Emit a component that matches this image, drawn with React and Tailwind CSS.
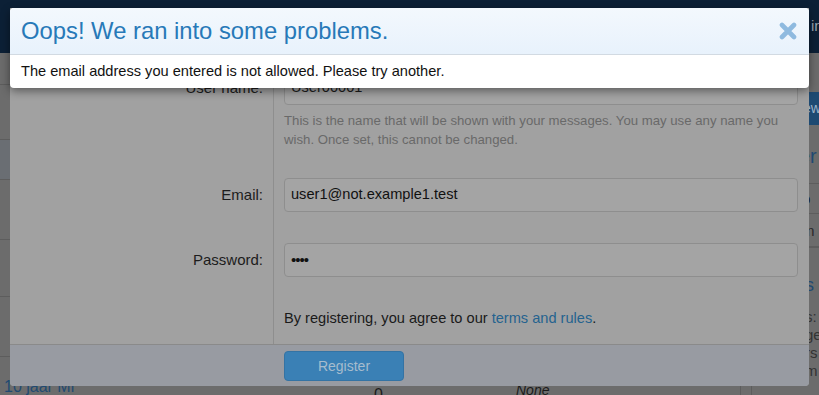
import React from 'react'

const font = { fontFamily: '"Liberation Sans", Arial, sans-serif' }

const CloseIcon = () => (
  <svg width="18" height="18" viewBox="0 0 18 18">
    <path d="M3 3 L15 15 M15 3 L3 15" stroke="#8fbadf" strokeWidth="4.6" strokeLinecap="round" />
  </svg>
)

const BackgroundPage = () => (
  <div className="w-[819px] h-[395px] bg-[#6c6c6c] flex flex-col">
    <div className="h-[53px] bg-[#0c2036] flex items-center justify-end">
      <span className="text-[15px] text-[#9aa6b3] pr-[0px] w-[8px] overflow-hidden">in</span>
    </div>
    <div className="flex flex-1">
      {/* main listing */}
      <div className="w-[740px] flex flex-col">
        <div className="h-[32px] border-b border-[#5d5d5d]" />
        <div className="h-[55px] border-b border-[#5d5d5d]" />
        <div className="h-[40px] bg-[#6a6e73] border-b border-[#5d5d5d]" />
        <div className="h-[60px] border-b border-[#5d5d5d]" />
        <div className="h-[57px] border-b border-[#5d5d5d]" />
        <div className="h-[60px] border-b border-[#5d5d5d]" />
        <div className="flex items-start h-[38px] text-[16px] leading-[18px]">
          <span className="pl-[4px] pt-[21px] text-[#1f4a72] w-[374px]">10 jaar Mi</span>
          <span className="text-[#1b1b1b] pt-[29px] w-[142px]">0</span>
          <span className="text-[#1b1b1b] pt-[24px] italic text-[14px]">None</span>
        </div>
      </div>
      {/* sidebar */}
      <div className="flex-1 border-l border-[#5d5d5d] flex flex-col items-end overflow-hidden">
        <div className="h-[39px]" />
        <div className="h-[33px] w-[20px] bg-[#1e4a72] text-[#9fb4c8] text-[14px] leading-[33px] pl-[4px] overflow-hidden">ew</div>
        <div className="h-[4px]" />
        <div className="h-[55px] w-[20px] border-b border-[#5d5d5d] text-[#1f4a72] text-[20px] leading-[55px] overflow-hidden">er</div>
        <div className="h-[30px] w-[20px] border-b border-[#5d5d5d] text-[#111] text-[15px] leading-[30px] pl-[3px]">b</div>
        <div className="h-[33px] w-[20px] border-b border-[#5d5d5d] text-[#2a2a2a] text-[15px] leading-[33px] pl-[3px] overflow-hidden">m</div>
        <div className="w-[68px] flex-1 border-l border-t border-[#5d5d5d] flex flex-col items-end text-[15px] leading-[18px]">
          <div className="w-[14px] text-[#1f4a72] text-[18px] mt-[28px]">s</div>
          <div className="w-[14px] text-[#333] mt-[14px] overflow-hidden">s:</div>
          <div className="w-[14px] text-[#333] overflow-hidden">ge</div>
          <div className="w-[14px] text-[#333] overflow-hidden">rs</div>
          <div className="w-[14px] text-[#333] overflow-hidden">m</div>
        </div>
      </div>
    </div>
  </div>
)

const RegisterDialog = () => (
  <div className="absolute left-[10px] top-[8px] w-[799px] h-[378px] bg-[#a1a1a1] rounded-b-[4px] flex flex-col overflow-hidden">
    <div className="flex flex-1">
      <div className="w-[264px] border-r border-[#8e8e8e] pr-[10px] flex flex-col items-end text-[15px] text-[#1c1c1c]">
        <div className="h-[34px] mt-[63px] flex items-center">User name:</div>
        <div className="h-[34px] mt-[73px] flex items-center">Email:</div>
        <div className="h-[34px] mt-[31px] flex items-center">Password:</div>
      </div>
      <div className="flex-1 pl-[10px] pr-[11px] flex flex-col">
        <div className="h-[34px] mt-[63px] rounded-[4px] border border-[#8e8e8e] bg-[#a4a4a4] px-[6px] flex items-center text-[14.6px] text-[#1c1c1c]">User00001</div>
        <p className="mt-[6px] text-[13.2px] leading-[19px] text-[#696969]">
          This is the name that will be shown with your messages. You may use any name you wish. Once set, this cannot be changed.
        </p>
        <div className="h-[34px] mt-[29px] rounded-[4px] border border-[#8e8e8e] bg-[#a4a4a4] px-[6px] flex items-center text-[14.6px] text-[#111]">user1@not.example1.test</div>
        <div className="h-[34px] mt-[31px] rounded-[4px] border border-[#8e8e8e] bg-[#a4a4a4] px-[6px] flex items-center text-[15px] text-[#111] tracking-[-1px]">••••</div>
        <p className="mt-[31px] text-[14.6px] leading-[20px] text-[#1a1a1a]">
          By registering, you agree to our <span className="text-[#25638f]">terms and rules</span>.
        </p>
      </div>
    </div>
    <div className="h-[42px] border-t border-[#8a8a8a] bg-[#989ba2] pl-[274px] pt-[6px]">
      <div className="w-[120px] h-[30px] rounded-[4px] bg-[#3a80b5] border border-[#3473a4] flex items-center justify-center text-[14px] text-[#a6bccd]">
        Register
      </div>
    </div>
  </div>
)

const ErrorOverlay = () => (
  <div className="absolute left-[10px] top-[8px] w-[799px] rounded-[4px] overflow-hidden shadow-[0_3px_10px_rgba(0,0,0,0.45)] bg-white">
    <div className="h-[47px] bg-gradient-to-b from-[#f3f8fd] to-[#e8f2fc] border-b border-[#d2dae2] flex items-center justify-between pl-[11px] pr-[12px]">
      <h2 className="text-[23.8px] text-[#2779b8] leading-none">Oops! We ran into some problems.</h2>
      <CloseIcon />
    </div>
    <div className="h-[33px] flex items-center pl-[11px] text-[14.6px] text-[#111]">
      The email address you entered is not allowed. Please try another.
    </div>
  </div>
)

export default function App() {
  return (
    <div className="relative w-[819px] h-[395px] overflow-hidden" style={font}>
      <BackgroundPage />
      <RegisterDialog />
      <ErrorOverlay />
    </div>
  )
}
